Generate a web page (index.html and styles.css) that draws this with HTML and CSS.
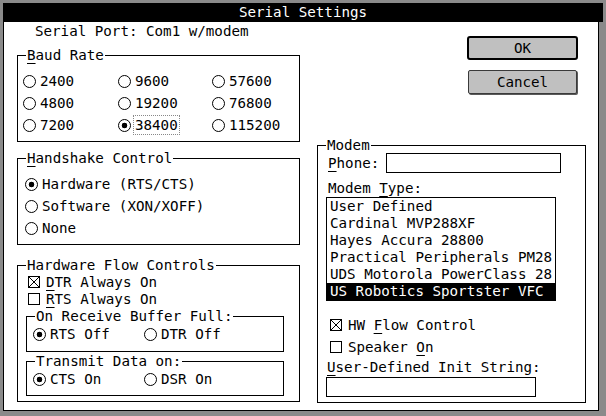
FILE: index.html
```html
<!DOCTYPE html>
<html lang="en">
<head>
    <meta charset="UTF-8" />
    <meta name="viewport" content="width=device-width, initial-scale=1.0" />
    <title>Serial Settings</title>
    <link rel="stylesheet" href="styles.css">
</head>
<body>
    <div class="window">
        <div class="title">Serial Settings</div>
        <div class="client">
            <div class="col-left">
                <p class="port">Serial Port: Com1 w/modem</p>

                <fieldset class="group baud">
                    <legend><u>B</u>aud Rate</legend>
                    <div class="baud-grid">
                        <label class="opt"><span class="radio"></span>2400</label>
                        <label class="opt"><span class="radio"></span>9600</label>
                        <label class="opt"><span class="radio"></span>57600</label>
                        <label class="opt"><span class="radio"></span>4800</label>
                        <label class="opt"><span class="radio"></span>19200</label>
                        <label class="opt"><span class="radio"></span>76800</label>
                        <label class="opt"><span class="radio"></span>7200</label>
                        <label class="opt"><span class="radio on"></span><span class="focus">38400</span></label>
                        <label class="opt"><span class="radio"></span>115200</label>
                    </div>
                </fieldset>

                <fieldset class="group handshake">
                    <legend><u>H</u>andshake Control</legend>
                    <div class="handshake-list">
                        <label class="opt"><span class="radio on"></span>Hardware (RTS/CTS)</label>
                        <label class="opt"><span class="radio"></span>Software (XON/XOFF)</label>
                        <label class="opt"><span class="radio"></span>None</label>
                    </div>
                </fieldset>

                <fieldset class="group flow">
                    <legend>Hardware Flow Controls</legend>
                    <div class="flow-body">
                        <label class="check-row"><span class="box on"></span><span><u>D</u>TR Always On</span></label>
                        <label class="check-row"><span class="box"></span><span><u>R</u>TS Always On</span></label>

                        <fieldset class="group sub">
                            <legend>On Receive Buffer Full:</legend>
                            <div class="pair">
                                <label class="opt"><span class="radio on"></span>RTS Off</label>
                                <label class="opt"><span class="radio"></span>DTR Off</label>
                            </div>
                        </fieldset>

                        <fieldset class="group sub sub-last">
                            <legend>Transmit Data on:</legend>
                            <div class="pair">
                                <label class="opt"><span class="radio on"></span>CTS On</label>
                                <label class="opt"><span class="radio"></span>DSR On</label>
                            </div>
                        </fieldset>
                    </div>
                </fieldset>
            </div>

            <div class="col-right">
                <div class="buttons">
                    <button type="button" class="btn btn-default">OK</button>
                    <button type="button" class="btn">Cancel</button>
                </div>

                <fieldset class="group modem">
                    <legend>Modem</legend>
                    <div class="modem-body">
                        <div class="phone-row">
                            <span><u>P</u>hone:</span>
                            <input type="text" class="field phone">
                        </div>
                        <p class="label type-label">Modem <u>T</u>ype:</p>
                        <ul class="listbox">
                            <li>User Defined</li>
                            <li>Cardinal MVP288XF</li>
                            <li>Hayes Accura 28800</li>
                            <li>Practical Peripherals PM28</li>
                            <li>UDS Motorola PowerClass 28</li>
                            <li class="sel">US Robotics Sportster VFC</li>
                        </ul>
                        <label class="check-row hw"><span class="box on"></span><span>HW <u>F</u>low Control</span></label>
                        <label class="check-row speaker"><span class="box"></span><span>Speaker <u>O</u>n</span></label>
                        <p class="label init-label"><u>U</u>ser-Defined Init String:</p>
                        <input type="text" class="field init">
                    </div>
                </fieldset>
            </div>
        </div>
    </div>
</body>
</html>
```

FILE: styles.css
```css
* {
    margin: 0;
    padding: 0;
    box-sizing: border-box;
}

body {
    font-family: "DejaVu Sans Mono", "Liberation Mono", monospace;
    font-size: 14.2px;
    color: #000;
    background: #fff;
}

u {
    text-underline-offset: 3px;
}

.window {
    width: 606px;
    height: 416px;
    background: #8a8a8a;
    padding: 3px 3px 5px 3px;
    display: flex;
    flex-direction: column;
}

.title {
    height: 19px;
    line-height: 19px;
    background: #000;
    color: #fff;
    text-align: center;
}

.client {
    flex: 1;
    display: flex;
    gap: 17px;
    margin-right: 4px;
    padding: 1px 0 0 13px;
    background: #fff;
    border: 1px solid #000;
    border-top: none;
}

.col-left {
    width: 283px;
    display: flex;
    flex-direction: column;
}

.col-right {
    width: 269px;
    display: flex;
    flex-direction: column;
}

.port {
    line-height: 16px;
    margin-left: 18px;
}

/* group boxes */
.group {
    border: 1px solid #000;
    min-width: 0;
}

.group legend {
    margin-left: 8px;
    padding: 0 1px;
    line-height: 15px;
}

.opt {
    display: flex;
    align-items: center;
    gap: 4px;
    white-space: nowrap;
}

.radio {
    width: 13px;
    height: 13px;
    flex: none;
    border: 1px solid #000;
    border-radius: 50%;
    background: #fff;
}

.radio.on {
    background: radial-gradient(circle, #000 0 2.6px, #fff 3.1px);
}

.box {
    width: 12px;
    height: 12px;
    flex: none;
    border: 1px solid #000;
    background: #fff;
}

.box.on {
    background:
        linear-gradient(45deg, transparent calc(50% - 0.6px), #000 calc(50% - 0.6px), #000 calc(50% + 0.6px), transparent calc(50% + 0.6px)),
        linear-gradient(-45deg, transparent calc(50% - 0.6px), #000 calc(50% - 0.6px), #000 calc(50% + 0.6px), transparent calc(50% + 0.6px)),
        #fff;
}

.check-row {
    display: flex;
    align-items: center;
    gap: 6px;
    height: 17px;
    padding-left: 10px;
    white-space: nowrap;
}

.focus {
    outline: 1px dotted #888;
    outline-offset: 1px;
}

/* baud rate */
.baud {
    margin-top: 9px;
}

.baud-grid {
    display: grid;
    grid-template-columns: 95px 94px 1fr;
    grid-auto-rows: 22px;
    padding: 7px 0 5px 5px;
}

/* handshake */
.handshake {
    margin-top: 9px;
}

.handshake-list {
    display: grid;
    grid-auto-rows: 22px;
    padding: 7px 0 5px 7px;
}

/* hardware flow */
.flow {
    margin-top: 13px;
}

.flow-body {
    padding: 0 15px 5px 8px;
}

.flow-body .check-row {
    padding-left: 2px;
}

.sub {
    margin-top: 2px;
}

.sub .pair {
    display: grid;
    grid-template-columns: 111px 1fr;
    height: 20px;
    padding-left: 6px;
    margin-bottom: 7px;
}

.sub-last .pair {
    margin-bottom: 6px;
}

/* buttons */
.buttons {
    display: flex;
    flex-direction: column;
    align-items: flex-start;
    gap: 10px;
    margin: 13px 0 0 150px;
}

.btn {
    font: inherit;
    color: #000;
    background: #c0c0c0;
    height: 24px;
    width: 109px;
    margin-left: 1px;
    border: 1px solid #3a3a3a;
    border-radius: 2px;
    box-shadow: 1px 1px 0 #5a5a5a;
}

.btn-default {
    width: 111px;
    margin-left: 0;
    border: 2px solid #000;
    border-radius: 3px;
    box-shadow: none;
}

/* modem */
.modem {
    margin-top: 44px;
}

.modem-body {
    padding: 0 0 5px 10px;
}

.phone-row {
    display: flex;
    align-items: center;
    gap: 7px;
    height: 20px;
}

.field {
    display: block;
    height: 20px;
    border: 1px solid #000;
    background: #fff;
    font: inherit;
}

.phone {
    width: 175px;
}

.label {
    line-height: 16px;
}

.type-label {
    margin-top: 7px;
}

.listbox {
    list-style: none;
    width: 230px;
    margin: 1px 0 0 -2px;
    border: 1px solid #000;
}

.listbox li {
    height: 17px;
    line-height: 17px;
    padding-left: 3px;
    white-space: nowrap;
}

.listbox .sel {
    background: #000;
    color: #fff;
}

.modem-body .check-row {
    padding-left: 2px;
}

.hw {
    margin-top: 15px;
}

.speaker {
    margin-top: 5px;
}

.init-label {
    margin-top: 4px;
    margin-left: -1px;
}

.init {
    width: 210px;
    margin: 2px 0 0 -2px;
}
```
